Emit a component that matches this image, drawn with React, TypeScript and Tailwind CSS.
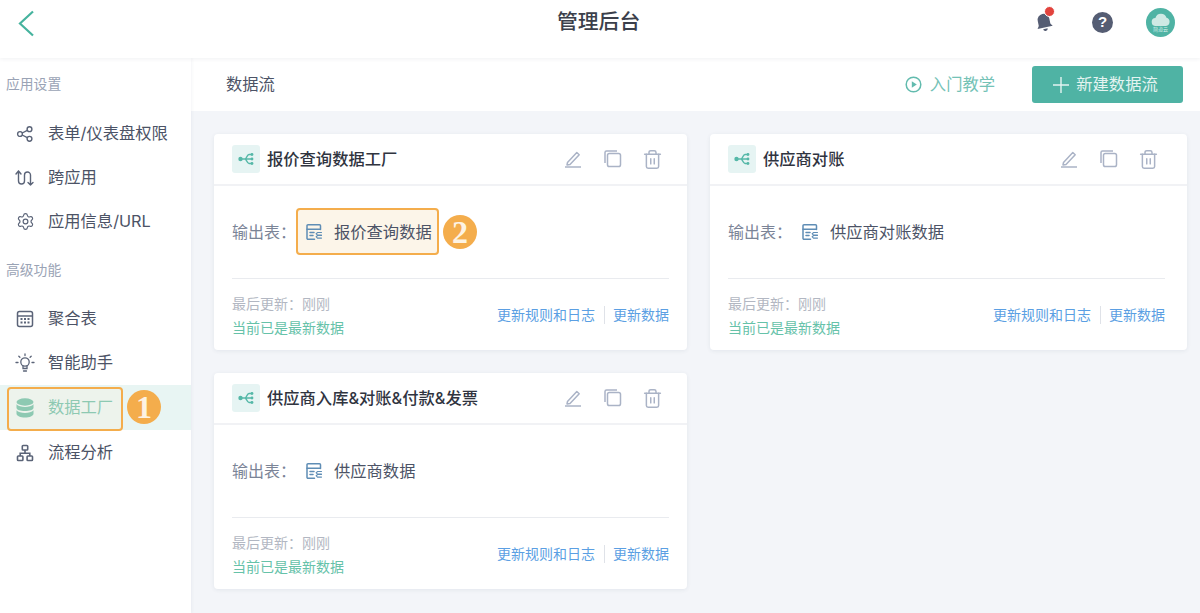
import { Settings, Trash2 } from "lucide-react";
import type { ReactNode } from "react";

const cjk = "font-['Inter','Noto_Sans_CJK_SC',sans-serif]";

function ShareIcon() {
  return (
    <svg width="18" height="18" viewBox="0 0 18 18" fill="none" stroke="#5b6478" strokeWidth="1.4">
      <circle cx="4" cy="9" r="2.4" />
      <circle cx="13.5" cy="4.2" r="2.4" />
      <circle cx="13.5" cy="13.8" r="2.4" />
      <path d="M6.2 8 11.3 5.3M6.2 10l5.1 2.7" />
    </svg>
  );
}

function CrossIcon() {
  return (
    <svg width="20" height="20" viewBox="0 0 20 20" fill="none" stroke="#5b6478" strokeWidth="1.4" strokeLinecap="round" strokeLinejoin="round">
      <path d="M1 6 3.5 3 6 6M3.5 3v10a3 3 0 0 0 6 0V7a3 3 0 0 1 6 0v10M13 14.5l2.5 2.5 2.5-2.5" />
    </svg>
  );
}

function TableIcon() {
  return (
    <svg width="18" height="18" viewBox="0 0 18 18" fill="none" stroke="#5b6478" strokeWidth="1.5">
      <rect x="1.5" y="1.5" width="15" height="15" rx="2" />
      <path d="M1.5 6h15" />
      <path d="M4.5 9h2M8 9h2M11.5 9h2M4.5 12.5h2M8 12.5h2M11.5 12.5h2" strokeWidth="1.8" />
    </svg>
  );
}

function BulbIcon() {
  return (
    <svg width="20" height="20" viewBox="0 0 20 20" fill="none" stroke="#5b6478" strokeWidth="1.3" strokeLinecap="round">
      <circle cx="10" cy="9" r="4.2" />
      <path d="M8 13v2.500h4V13M8.500 18h3M10 1v1.500M3.800 3.200l1.100 1.100M16.200 3.200l-1.100 1.100M1 9.500h2M17 9.500h2" />
    </svg>
  );
}

function StackIcon() {
  return (
    <svg width="18" height="20" viewBox="0 0 18 20" fill="#5fb99f">
      <ellipse cx="9" cy="4" rx="8.5" ry="3.7" />
      <path d="M.5 6.300C2 8.300 5.500 9 9 9s7-.7 8.500-2.700V9.700C17.500 11.800 13.500 13 9 13S.5 11.800.5 9.700z" />
      <path d="M.5 12.300C2 14.300 5.500 15 9 15s7-.7 8.500-2.700V15.700C17.500 17.800 13.500 19.500 9 19.500S.5 17.800.5 15.700z" />
    </svg>
  );
}

function FlowIcon() {
  return (
    <svg width="18" height="18" viewBox="0 0 18 18" fill="none" stroke="#5b6478" strokeWidth="1.6">
      <rect x="6.300" y="1.500" width="5.400" height="4.500" rx="0.800" />
      <rect x="1.500" y="12" width="5.400" height="4.500" rx="0.800" />
      <rect x="11.100" y="12" width="5.400" height="4.500" rx="0.800" />
      <path d="M9 6v3M4.200 12V9.300h9.600V12" />
    </svg>
  );
}

function FactoryIcon() {
  return (
    <svg width="16" height="14" viewBox="0 0 16 14" fill="#55b8a8" stroke="#55b8a8" strokeWidth="1.5">
      <circle cx="2.500" cy="7" r="2.200" stroke="none" />
      <circle cx="14" cy="2.500" r="1.400" stroke="none" />
      <circle cx="14" cy="7" r="1.400" stroke="none" />
      <circle cx="14" cy="11.500" r="1.400" stroke="none" />
      <path d="M3 7h11M7 7c1.500 0 2-4.500 4-4.500h3M7 7c1.500 0 2 4.500 4 4.500h3" fill="none" />
    </svg>
  );
}

function OutputIcon() {
  return (
    <svg width="18" height="18" viewBox="0 0 18 18" fill="none" stroke="#5f8db5" strokeWidth="1.500" strokeLinecap="round">
      <path d="M15.500 6.500V2.800a1 1 0 0 0-1-1H3a1 1 0 0 0-1 1v12.400a1 1 0 0 0 1 1h6.500" />
      <path d="M2 6.200h13M5 9.500h4M5 12.500h3" />
      <path d="M16.500 9.500h-4l-1.300 1.300 1.300 1.300h4M16.500 12.500h-4l-1.300 1.300 1.300 1.300h4" strokeWidth="1.100" />
    </svg>
  );
}

function EditIcon() {
  return (
    <svg width="18" height="18" viewBox="0 0 18 18" fill="none" stroke="#aab3c6" strokeWidth="1.500" strokeLinejoin="round">
      <path d="M3.500 12.500 12.800 2.500l2.400 2.200L6 14.500l-3 .5z" />
      <path d="M1 17h16" />
    </svg>
  );
}

function CopyIcon() {
  return (
    <svg width="18" height="18" viewBox="0 0 18 18" fill="none" stroke="#aab3c6" strokeWidth="1.500">
      <rect x="3.500" y="3.500" width="13" height="13" rx="1.800" />
      <path d="M1 13V2.500A1.500 1.500 0 0 1 2.500 1H13" />
    </svg>
  );
}

function Section({ label }: { label: string }) {
  return <div className="pl-[6px] text-[13.8px] leading-[20px] text-[#9aa3b5]">{label}</div>;
}

function NavItem({ icon, label, active }: { icon: ReactNode; label: string; active?: boolean }) {
  return (
    <div className={`flex h-[45px] items-center ${active ? "bg-[#e8f5f3] text-[#5fb99f]" : "text-[#4c5366]"}`}>
      <div className="flex w-[48px] shrink-0 justify-center pl-[2px]">
        <div className="flex w-[20px] justify-center">{icon}</div>
      </div>
      <span className="text-[16.3px]">{label}</span>
    </div>
  );
}

function Callout({ n }: { n: string }) {
  return (
    <span className="flex h-[34px] w-[34px] items-center justify-center rounded-full bg-[#f4ad4c] font-['Liberation_Serif',serif] text-[32px] font-bold leading-none text-[#fdf3e3]">
      {n}
    </span>
  );
}

function Card({ title, table, callout, wide }: { title: string; table: string; callout?: boolean; wide?: boolean }) {
  return (
    <div className="h-[216px] rounded-[4px] bg-white shadow-[0_1px_4px_rgba(40,60,90,0.08)]">
      <div className={`flex h-[52px] items-center border-b-2 border-[#f1f2f5] pl-[18px] ${wide ? "pr-[28px]" : "pr-[24px]"}`}>
        <span className="flex h-[28px] w-[28px] items-center justify-center rounded-[3px] bg-[#e6f4f3]">
          <FactoryIcon />
        </span>
        <span className="ml-[7px] flex-1 text-[16.3px] font-medium text-[#30343f]">{title}</span>
        <div className="flex items-center">
          <EditIcon />
          <span className="ml-[22px]">
            <CopyIcon />
          </span>
          <Trash2 size={21} color="#aab3c6" strokeWidth={1.700} className="ml-[20px]" />
        </div>
      </div>
      <div className={`ml-[18px] flex h-[93px] items-center border-b border-[#e9ebef] ${wide ? "mr-[22px]" : "mr-[18px]"}`}>
        <span className="text-[16px] text-[#7b8497]">输出表：</span>
        <span className="relative flex h-[47px] items-center pl-[9px] pr-[7px]">
          {callout && (
            <span className="absolute -top-px bottom-px left-0 right-0 rounded-[4px] border-2 border-[#f4ad4c] bg-[#fcf5e9]" />
          )}
          <span className="relative flex items-center gap-[11px] text-[16.3px] text-[#4c5366]">
            <OutputIcon />
            {table}
          </span>
          {callout && (
            <span className="absolute left-[147px] top-[6px]">
              <Callout n="2" />
            </span>
          )}
        </span>
      </div>
      <div className={`ml-[18px] flex h-[70px] items-center justify-between pt-[3px] ${wide ? "mr-[22px]" : "mr-[18px]"}`}>
        <div className="text-[14px] leading-[24px]">
          <div className="text-[#b2b7c2]">最后更新：刚刚</div>
          <div className="text-[#66c2a9]">当前已是最新数据</div>
        </div>
        <div className="-mt-[2px] flex items-center text-[14px] text-[#5b9fe3]">
          <span>更新规则和日志</span>
          <span className="mx-[8.5px] h-[18px] w-px bg-[#dfe2e8]" />
          <span>更新数据</span>
        </div>
      </div>
    </div>
  );
}

export default function App() {
  return (
    <div className={`flex h-[613px] w-[1200px] flex-col overflow-hidden bg-[#f3f5f9] ${cjk}`}>
      <header className="relative z-10 flex h-[58px] shrink-0 items-center bg-white pl-[18px] pr-[25px] shadow-[0_1px_4px_rgba(40,60,90,0.07)]">
        <svg width="16" height="27" viewBox="0 0 16 27" fill="none" stroke="#46b39e" strokeWidth="2.2" className="mb-[12px]">
          <path d="M15 1.500 2 13.500l13 12" />
        </svg>
        <div className="flex-1 pb-[14px] pl-[523px] text-[20.8px] font-medium text-[#3b3f4b]">管理后台</div>
        <div className="mb-[14px] flex items-center">
          <span className="relative mr-[38px]">
            <svg width="20" height="22" viewBox="0 0 22 22" fill="#555d73" className="-rotate-[12deg]">
              <path d="M11 2a6.500 6.500 0 0 0-6.500 6.500V14L2.500 17h17l-2-3V8.500A6.500 6.500 0 0 0 11 2z" />
              <path d="M8.500 18.500a2.500 2.500 0 0 0 5 0z" />
            </svg>
            <span className="absolute -right-[1px] -top-[5px] h-[11px] w-[11px] rounded-full border border-white bg-[#e2433d]" />
          </span>
          <span className="mr-[33px] flex h-[21px] w-[21px] items-center justify-center rounded-full bg-[#555d73] font-['Liberation_Sans',sans-serif] text-[15px] font-bold text-white">
            ?
          </span>
          <span className="flex h-[29px] w-[29px] flex-col items-center justify-center rounded-full bg-[#4fb3a4]">
            <svg width="20" height="13" viewBox="0 0 20 13" fill="#cfe9e4">
              <path d="M5 13a4 4 0 0 1-.6-8A5.800 5.800 0 0 1 15.500 4.800 4.200 4.200 0 0 1 15 13z" />
            </svg>
            <span className="h-[6px] text-[5px] leading-[6px] text-[#d9f0ec]">简道云</span>
          </span>
        </div>
      </header>
      <div className="flex min-h-0 flex-1">
        <aside className="relative z-[1] w-[191px] shrink-0 bg-white shadow-[1px_0_3px_rgba(40,60,90,0.05)]">
          <div className="mt-[16px]">
            <Section label="应用设置" />
          </div>
          <div className="mt-[17px]">
            <NavItem icon={<ShareIcon />} label="表单/仪表盘权限" />
            <div className="-mt-px">
              <NavItem icon={<CrossIcon />} label="跨应用" />
            </div>
            <div className="-mt-px">
              <NavItem icon={<Settings size={19} strokeWidth={1.500} color="#5b6478" />} label="应用信息/URL" />
            </div>
          </div>
          <div className="mt-[16px]">
            <Section label="高级功能" />
          </div>
          <div className="mt-[16px]">
            <NavItem icon={<TableIcon />} label="聚合表" />
            <div className="-mt-px">
              <NavItem icon={<BulbIcon />} label="智能助手" />
            </div>
            <NavItem icon={<StackIcon />} label="数据工厂" active />
            <NavItem icon={<FlowIcon />} label="流程分析" />
          </div>
          {/* callout over the active row */}
          <div className="absolute left-[7px] top-[329px] h-[44px] w-[116px] rounded-[4px] border-2 border-[#f4ad4c] bg-[#f9eedd]/30" />
          <div className="absolute left-[127px] top-[332px]">
            <Callout n="1" />
          </div>
        </aside>
        <main className="min-w-0 flex-1">
          <div className="flex h-[53px] items-center bg-white pl-[35px] pr-[17px]">
            <span className="flex-1 text-[16.3px] text-[#4c5366]">数据流</span>
            <span className="flex items-center gap-[8px] text-[16.3px] text-[#74c2b6]">
              <svg width="17" height="17" viewBox="0 0 17 17" fill="none" stroke="#62bbae" strokeWidth="1.5">
                <circle cx="8.500" cy="8.500" r="7.300" />
                <path d="M6.800 5.200v6.600l5-3.300z" fill="#62bbae" stroke="none" />
              </svg>
              入门教学
            </span>
            <button className="ml-[37px] flex h-[37px] w-[151px] items-center justify-center gap-[7px] rounded-[3px] bg-[#4fb3a4] pr-[4px] text-[16.3px] text-[#e4f4f1]">
              <svg width="16" height="16" viewBox="0 0 16 16" stroke="#e4f4f1" strokeWidth="1.4">
                <path d="M8 0v16M0 8h16" />
              </svg>
              新建数据流
            </button>
          </div>
          <div className="grid grid-cols-[473px_477px] gap-[23px] pl-[23px] pt-[23px]">
            <Card title="报价查询数据工厂" table="报价查询数据" callout />
            <Card title="供应商对账" table="供应商对账数据" wide />
            <Card title="供应商入库&对账&付款&发票" table="供应商数据" />
          </div>
        </main>
      </div>
    </div>
  );
}
